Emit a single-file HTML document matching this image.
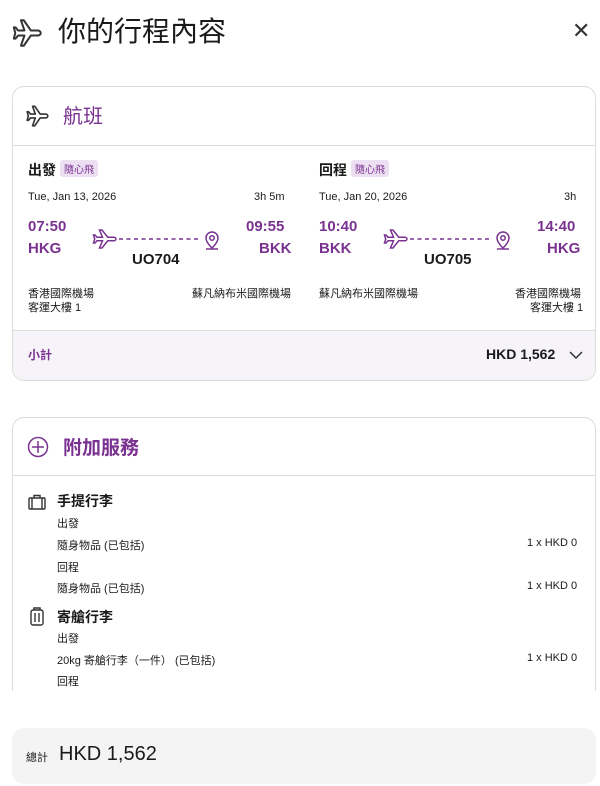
<!DOCTYPE html>
<html><head><meta charset="utf-8"><style>
*{margin:0;padding:0;box-sizing:border-box}
body{width:600px;height:786px;background:#fff;font-family:"Liberation Sans","Noto Sans CJK TC",sans-serif;color:#1a1a1a;position:relative;overflow:hidden}
.a{position:absolute;white-space:nowrap}
.p{color:#7a3291}
.card{position:absolute;left:12px;width:584px;border:1px solid #dcdcdc;border-radius:12px;overflow:hidden;background:#fff}
.tag{display:inline-block;background:#ecdff2;color:#7a3291;font-size:10px;padding:1px 4px;border-radius:3px;vertical-align:2px;margin-left:4px;font-weight:normal}
.b{font-weight:bold}
.s{font-size:11px}
.big{font-size:15px;font-weight:bold}
</style></head><body>
<svg class="a" style="left:11px;top:16px" width="34" height="34" viewBox="0 0 24 24" fill="none" stroke="#333" stroke-width="1.4" stroke-linejoin="round"><path d="M21 12c0-1-1-1.8-2-1.8h-5L9 3H7l2.5 7.2H5L3.2 8H2l1 4-1 4h1.2L5 13.8h4.5L7 21h2l5-7.2h5c1 0 2-.8 2-1.8z"/></svg>
<div class="a" style="left:58px;top:10px;font-size:28px">你的行程內容</div>
<div class="a" style="left:572px;top:18px;font-size:22px;color:#333">✕</div>

<div class="card" style="top:86px;height:295px">
 <div style="height:59px;border-bottom:1px solid #dcdcdc;position:relative">
  <svg class="a" style="left:12px;top:16px" width="26" height="26" viewBox="0 0 24 24" fill="none" stroke="#333" stroke-width="1.5" stroke-linejoin="round"><path d="M21 12c0-1-1-1.8-2-1.8h-5L9 3H7l2.5 7.2H5L3.2 8H2l1 4-1 4h1.2L5 13.8h4.5L7 21h2l5-7.2h5c1 0 2-.8 2-1.8z"/></svg>
  <div class="a p" style="left:50px;top:13px;font-size:20px">航班</div>
 </div>
 <div class="a b" style="left:15px;top:73px;font-size:14px">出發<span class="tag">隨心飛</span></div>
 <div class="a s" style="left:15px;top:104px">Tue, Jan 13, 2026</div>
 <div class="a s" style="left:241px;top:104px">3h 5m</div>
 <div class="a big p" style="left:15px;top:131px">07:50</div>
 <div class="a big p" style="left:15px;top:153px">HKG</div>
 <div class="a big p" style="left:233px;top:131px">09:55</div>
 <div class="a big p" style="left:246px;top:153px">BKK</div>
 <svg class="a" style="left:78px;top:139px" width="130" height="26" viewBox="0 0 130 26" fill="none" stroke="#7a3291" stroke-width="1.5"><path transform="translate(0,1)" d="M25 12c0-1-1.2-1.8-2.3-1.8h-6L11 3H8.5l3 7.2H6L4 8H2.5l1.2 4-1.2 4H4l2-2.2h5.5L8.5 21H11l5.7-7.2h6c1.1 0 2.3-.8 2.3-1.8z"/><path d="M28 13h80" stroke-dasharray="4 3.5"/><path d="M121 22s-6-5.5-6-10a6 6 0 0112 0c0 4.5-6 10-6 10z"/><circle cx="121" cy="12" r="2.2"/><path d="M115 23h12"/></svg>
 <div class="a b" style="left:119px;top:164px;font-size:15px">UO704</div>
 <div class="a s" style="left:15px;top:198px">香港國際機場</div>
 <div class="a s" style="left:15px;top:212px">客運大樓 1</div>
 <div class="a s" style="left:179px;top:198px">蘇凡納布米國際機場</div>

 <div class="a b" style="left:306px;top:73px;font-size:14px">回程<span class="tag">隨心飛</span></div>
 <div class="a s" style="left:306px;top:104px">Tue, Jan 20, 2026</div>
 <div class="a s" style="left:551px;top:104px">3h</div>
 <div class="a big p" style="left:306px;top:131px">10:40</div>
 <div class="a big p" style="left:306px;top:153px">BKK</div>
 <div class="a big p" style="left:524px;top:131px">14:40</div>
 <div class="a big p" style="left:534px;top:153px">HKG</div>
 <svg class="a" style="left:369px;top:139px" width="130" height="26" viewBox="0 0 130 26" fill="none" stroke="#7a3291" stroke-width="1.5"><path transform="translate(0,1)" d="M25 12c0-1-1.2-1.8-2.3-1.8h-6L11 3H8.5l3 7.2H6L4 8H2.5l1.2 4-1.2 4H4l2-2.2h5.5L8.5 21H11l5.7-7.2h6c1.1 0 2.3-.8 2.3-1.8z"/><path d="M28 13h80" stroke-dasharray="4 3.5"/><path d="M121 22s-6-5.5-6-10a6 6 0 0112 0c0 4.5-6 10-6 10z"/><circle cx="121" cy="12" r="2.2"/><path d="M115 23h12"/></svg>
 <div class="a b" style="left:411px;top:164px;font-size:15px">UO705</div>
 <div class="a s" style="left:306px;top:198px">蘇凡納布米國際機場</div>
 <div class="a s" style="left:502px;top:198px">香港國際機場</div>
 <div class="a s" style="left:517px;top:212px">客運大樓 1</div>

 <div class="a" style="left:0;top:243px;width:584px;height:52px;background:#f6f4f8;border-top:1px solid #dcdcdc"></div>
 <div class="a p b" style="left:15px;top:259px;font-size:12px">小計</div>
 <div class="a b" style="left:473px;top:259px;font-size:14px">HKD 1,562</div>
 <svg class="a" style="left:555px;top:262px" width="16" height="12" viewBox="0 0 16 12" fill="none" stroke="#333" stroke-width="1.5"><path d="M2 3l6 6 6-6"/></svg>
</div>

<div class="card" style="top:417px;height:300px">
 <div style="height:58px;border-bottom:1px solid #dcdcdc;position:relative">
  <svg class="a" style="left:14px;top:18px" width="22" height="22" viewBox="0 0 22 22" fill="none" stroke="#7a3291" stroke-width="1.5"><circle cx="11" cy="11" r="9.5"/><path d="M11 5v12M5 11h12"/></svg>
  <div class="a p b" style="left:50px;top:15px;font-size:19px">附加服務</div>
 </div>
 <svg class="a" style="left:15px;top:76px" width="18" height="16" viewBox="0 0 18 16" fill="none" stroke="#333" stroke-width="1.4"><rect x="1" y="4" width="16" height="11" rx="1"/><path d="M6 4V1.5h6V4M4 4v11M14 4v11"/></svg>
 <div class="a b" style="left:44px;top:73px;font-size:14px">手提行李</div>
 <div class="a s" style="left:44px;top:97px">出發</div>
 <div class="a s" style="left:44px;top:119px">隨身物品 (已包括)</div>
 <div class="a s" style="left:514px;top:119px">1 x HKD 0</div>
 <div class="a s" style="left:44px;top:141px">回程</div>
 <div class="a s" style="left:44px;top:162px">隨身物品 (已包括)</div>
 <div class="a s" style="left:514px;top:162px">1 x HKD 0</div>
 <svg class="a" style="left:17px;top:189px" width="14" height="20" viewBox="0 0 14 20" fill="none" stroke="#333" stroke-width="1.4"><rect x="1" y="3" width="12" height="15" rx="2"/><path d="M4 3V1h6v2M5 6v9M9 6v9"/></svg>
 <div class="a b" style="left:44px;top:189px;font-size:14px">寄艙行李</div>
 <div class="a s" style="left:44px;top:212px">出發</div>
 <div class="a s" style="left:44px;top:234px">20kg 寄艙行李（一件） (已包括)</div>
 <div class="a s" style="left:514px;top:234px">1 x HKD 0</div>
 <div class="a s" style="left:44px;top:255px">回程</div>
</div>
<div class="a" style="left:0;top:691px;width:600px;height:95px;background:#fff"></div>
<div class="a" style="left:12px;top:728px;width:584px;height:56px;background:#f4f4f4;border-radius:12px"></div>
<div class="a" style="left:26px;top:749px;font-size:11px">總計</div>
<div class="a" style="left:59px;top:743px;font-size:20px">HKD 1,562</div>
</body></html>
